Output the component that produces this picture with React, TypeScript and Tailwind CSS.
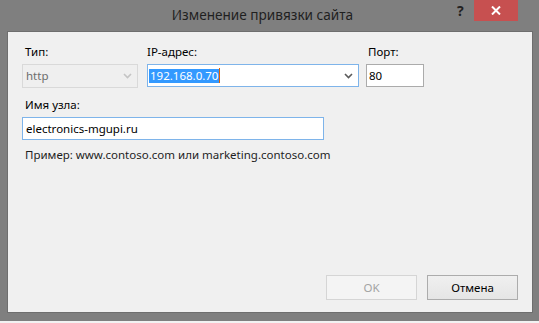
import React from "react";

const font = { fontFamily: '"Noto Sans", "Open Sans", sans-serif' };

function Chevron({ color }: { color: string }) {
  return (
    <svg width="9" height="6" viewBox="0 0 9 6" className="shrink-0">
      <path d="M1 1 L4.5 4.5 L8 1" fill="none" stroke={color} strokeWidth="1.6" />
    </svg>
  );
}

export default function App() {
  return (
    <div
      className="w-[539px] h-[323px] bg-[#7f7f7f] flex flex-col text-[11.5px] overflow-hidden"
      style={font}
    >
      {/* Title bar */}
      <div className="relative h-[31px] shrink-0 flex items-start justify-center">
        <div className="pt-[5px] pr-[14px] text-[13.6px] leading-[20px] text-[#1f1f1f]">
          Изменение привязки сайта
        </div>
        <div className="absolute left-[457px] top-[3px] text-[14px] font-bold leading-[16px] text-[#222]">
          ?
        </div>
        <div className="absolute left-[474px] top-0 w-[44px] h-[21px] bg-[#c75050] flex items-center justify-center">
          <svg width="10" height="9" viewBox="0 0 10 9">
            <path d="M1 0.5 L9 8.5 M9 0.5 L1 8.5" stroke="#ffffff" strokeWidth="2" />
          </svg>
        </div>
      </div>

      {/* Content */}
      <div className="ml-[7px] mr-[6px] h-[282px] shrink-0 bg-[#f0f0f0] border border-[#6e6e6e] flex flex-col pl-[14px] pr-[14px] pt-[12px] pb-[12px]">
        {/* Row 1 */}
        <div className="flex">
          <div className="w-[116px] flex flex-col">
            <div className="pl-[3px] h-[19px] leading-[16px] text-[#000]">Тип:</div>
            <div className="h-[24px] border border-[#d9d9d9] bg-[#efefef] flex items-center justify-between pl-[3px] pr-[5px] mt-[1px]">
              <span className="text-[#6d6d6d]">http</span>
              <Chevron color="#c4c4c4" />
            </div>
          </div>
          <div className="w-[212px] ml-[9px] flex flex-col">
            <div className="h-[19px] leading-[16px] text-[#000]">IP-адрес:</div>
            <div className="h-[23px] mt-[1px] border border-[#7eb4ea] bg-white flex items-center justify-between pl-[1px] pr-[5px]">
              <div className="flex items-center">
                <span className="bg-[#3399ff] text-white leading-[14px] h-[14px] px-[1px]">192.168.0.70</span>
                <span className="w-[1px] h-[15px] bg-[#e06000]" />
              </div>
              <Chevron color="#5a5a5a" />
            </div>
          </div>
          <div className="w-[58px] ml-[7px] flex flex-col">
            <div className="pl-[2px] h-[19px] leading-[16px] text-[#000]">Порт:</div>
            <div className="h-[23px] mt-[1px] border border-[#ababab] bg-white flex items-center pl-[2px]">
              <span className="text-[#000]">80</span>
            </div>
          </div>
        </div>

        {/* Row 2 */}
        <div className="mt-[9px] pl-[3px] h-[19px] leading-[16px] text-[#000]">Имя узла:</div>
        <div className="w-[302px] h-[23px] mt-[1px] border border-[#7eb4ea] bg-white flex items-center pl-[3px]">
          <span className="text-[#000]">electronics-mgupi.ru</span>
        </div>
        <div className="mt-[7px] pl-[3px] leading-[16px] text-[#1e1e1e]">
          Пример: www.contoso.com или marketing.contoso.com
        </div>

        <div className="flex-1" />

        {/* Buttons */}
        <div className="flex justify-end gap-[10px]">
          <div className="w-[91px] h-[25px] border border-[#d5d5d5] bg-[#f4f4f4] flex items-center justify-center text-[#a3a3a3]">
            OK
          </div>
          <div className="w-[91px] h-[25px] border border-[#acacac] bg-gradient-to-b from-[#f0f0f0] to-[#e5e5e5] flex items-center justify-center text-[#000]">
            Отмена
          </div>
        </div>
      </div>

      <div className="h-[8px] shrink-0" />
      <div className="h-[2px] shrink-0 bg-[#f2f2f2]" />
    </div>
  );
}
